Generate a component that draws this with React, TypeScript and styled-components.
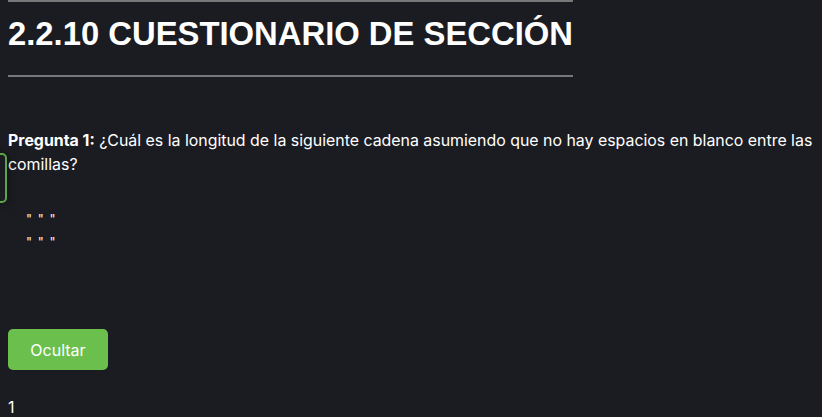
import React from "react";
import styled, { createGlobalStyle } from "styled-components";

const Global = createGlobalStyle`
  html, body { margin: 0; padding: 0; background: #1b1c21; }
  body { color: #ffffff; font-family: Inter, "Liberation Sans", Arial, sans-serif; font-size: 16px; overflow: hidden; }
`;

const Page = styled.div`
  position: relative;
  padding: 0 8px;
  height: 417px;
  box-sizing: border-box;
`;

const Header = styled.header`
  display: flex;
  flex-direction: column;
  width: fit-content;
`;

const Rule = styled.div`
  height: 2px;
  background: #77777a;
`;

const Title = styled.h1`
  margin: 0;
  padding: 12px 0 21px;
  font-family: "Liberation Sans", Arial, sans-serif;
  font-weight: 700;
  font-size: 32.8px;
  line-height: 40px;
  color: #ffffff;
`;

const Question = styled.p`
  margin: 52px 0 0;
  font-size: 15.9px;
  line-height: 24px;
  b { font-weight: 700; }
`;

const Code = styled.div`
  margin: 34px 0 0 18px;
  display: flex;
  flex-direction: column;
  gap: 7px;
  font-size: 13px;
  line-height: 16px;
  letter-spacing: 1px;
  color: #f2f2f2;
`;

const Note = styled.div`
  position: absolute;
  left: -10px;
  top: 153px;
  width: 13px;
  height: 46px;
  border: 2px solid #5ea34a;
  border-radius: 5px;
  box-shadow: 0 0 8px rgba(0, 0, 0, 0.5);
`;

const Button = styled.button`
  display: block;
  margin-top: 79px;
  width: 100px;
  height: 41px;
  border: none;
  border-radius: 5px;
  background: #6bbf4c;
  color: #ffffff;
  font-family: Inter, sans-serif;
  font-size: 16px;
`;

const Answer = styled.div`
  margin-top: 27px;
  font-size: 16px;
  line-height: 20px;
`;

export default function App() {
  return (
    <>
      <Global />
      <Page>
        <Note />
        <Header>
          <Rule />
          <Title>2.2.10 CUESTIONARIO DE SECCIÓN</Title>
          <Rule />
        </Header>
        <Question>
          <b>Pregunta 1:</b> ¿Cuál es la longitud de la siguiente cadena asumiendo que no hay espacios en blanco entre las comillas?
        </Question>
        <Code>
          <span>" " "</span>
          <span>" " "</span>
        </Code>
        <Button>Ocultar</Button>
        <Answer>1</Answer>
      </Page>
    </>
  );
}
